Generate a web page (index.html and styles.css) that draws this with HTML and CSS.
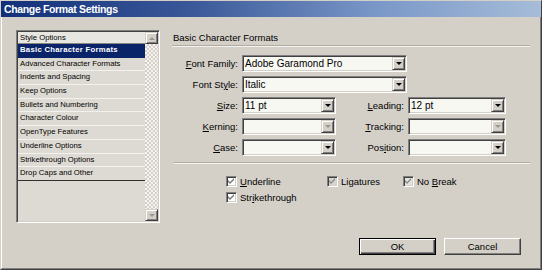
FILE: index.html
```html
<!DOCTYPE html>
<html>
<head>
<meta charset="utf-8">
<link rel="stylesheet" href="styles.css">
</head>
<body>
<div class="dialog">
  <div class="titlebar">Change Format Settings</div>
  <div class="body">
    <div class="main">
      <div class="list">
        <div class="items">
          <div class="list-head">Style Options</div>
          <div class="item selected">Basic Character Formats</div>
          <div class="item">Advanced Character Formats</div>
          <div class="item">Indents and Spacing</div>
          <div class="item">Keep Options</div>
          <div class="item">Bullets and Numbering</div>
          <div class="item">Character Colour</div>
          <div class="item">OpenType Features</div>
          <div class="item">Underline Options</div>
          <div class="item">Strikethrough Options</div>
          <div class="item last">Drop Caps and Other</div>
        </div>
        <div class="scroll">
          <div class="sbtn"><span class="arrow up"></span></div>
          <div class="track"></div>
          <div class="sbtn"><span class="arrow down"></span></div>
        </div>
      </div>
      <div class="panel">
        <div class="heading">Basic Character Formats</div>
        <div class="form">
          <label class="lbl"><u>F</u>ont Family:</label>
          <div class="select wide"><span class="value">Adobe Garamond Pro</span><span class="drop"><span class="arrow down dark"></span></span></div>

          <label class="lbl">Font St<u>y</u>le:</label>
          <div class="select wide"><span class="value">Italic</span><span class="drop"><span class="arrow down dark"></span></span></div>

          <label class="lbl"><u>S</u>ize:</label>
          <div class="select"><span class="value">11 pt</span><span class="drop"><span class="arrow down dark"></span></span></div>
          <label class="lbl"><u>L</u>eading:</label>
          <div class="select"><span class="value">12 pt</span><span class="drop"><span class="arrow down dark"></span></span></div>

          <label class="lbl"><u>K</u>erning:</label>
          <div class="select"><span class="value"></span><span class="drop"><span class="arrow down"></span></span></div>
          <label class="lbl"><u>T</u>racking:</label>
          <div class="select"><span class="value"></span><span class="drop"><span class="arrow down"></span></span></div>

          <label class="lbl"><u>C</u>ase:</label>
          <div class="select"><span class="value"></span><span class="drop"><span class="arrow down dark"></span></span></div>
          <label class="lbl">Pos<u>i</u>tion:</label>
          <div class="select"><span class="value"></span><span class="drop"><span class="arrow down dark"></span></span></div>
        </div>
        <div class="separator"></div>
        <div class="checks">
          <div class="check"><span class="box white"><svg viewBox="0 0 7 7" width="7" height="7"><path d="M0 2 L2 4 L6 0 L6 2 L2 6 L0 4 Z" fill="#7a7a7a"/></svg></span><span class="ctext"><u>U</u>nderline</span></div>
          <div class="check"><span class="box grey"><svg viewBox="0 0 7 7" width="7" height="7"><path d="M0 2 L2 4 L6 0 L6 2 L2 6 L0 4 Z" fill="#8a8a8a"/></svg></span><span class="ctext">Ligatures</span></div>
          <div class="check"><span class="box light"><svg viewBox="0 0 7 7" width="7" height="7"><path d="M0 2 L2 4 L6 0 L6 2 L2 6 L0 4 Z" fill="#8a8a8a"/></svg></span><span class="ctext">No <u>B</u>reak</span></div>
          <div class="check"><span class="box white"><svg viewBox="0 0 7 7" width="7" height="7"><path d="M0 2 L2 4 L6 0 L6 2 L2 6 L0 4 Z" fill="#7a7a7a"/></svg></span><span class="ctext">Str<u>i</u>kethrough</span></div>
        </div>
      </div>
    </div>
    <div class="buttons">
      <button class="btn default">OK</button>
      <button class="btn">Cancel</button>
    </div>
  </div>
</div>
</body>
</html>
```

FILE: styles.css
```css
html, body {
  margin: 0;
  padding: 0;
}
body {
  width: 542px;
  height: 270px;
  overflow: hidden;
  background: #d4d0c8;
  font-family: "Liberation Sans", Arial, sans-serif;
  color: #000;
}
.dialog {
  box-sizing: border-box;
  width: 542px;
  height: 270px;
  border: 1px solid;
  border-color: #d4d0c8 #404040 #404040 #d4d0c8;
  display: flex;
  flex-direction: column;
}
.titlebar {
  height: 16px;
  line-height: 16px;
  padding-left: 3px;
  background: linear-gradient(to right, #12307a 0%, #3a5898 35%, #7a98c8 70%, #a6bcd8 100%);
  color: #fff;
  font-weight: bold;
  font-size: 10.5px;
  letter-spacing: -0.35px;
  white-space: nowrap;
}
.body {
  flex: 1;
  border-left: 1px solid #fff;
  border-right: 1px solid #808080;
  border-bottom: 1px solid #808080;
  display: flex;
  flex-direction: column;
}
.main {
  display: flex;
  padding-top: 13px;
  padding-left: 14px;
}
.list {
  box-sizing: border-box;
  width: 144px;
  height: 193px;
  border: 1px solid;
  border-color: #808080 #fff #fff #808080;
  box-shadow: inset 1px 1px #404040, inset -1px -1px #d4d0c8;
  padding: 1px;
  display: flex;
  background: #dddad3;
}
.items {
  flex: 1;
  font-size: 7.7px;
}
.list-head {
  box-sizing: border-box;
  height: 12px;
  line-height: 11px;
  padding-left: 2px;
  background: #e8e6e1;
  border-bottom: 1px solid #8a8780;
}
.item {
  box-sizing: border-box;
  height: 13.7px;
  line-height: 12.7px;
  padding-left: 2px;
  border-bottom: 1px solid #f2f1ee;
  white-space: nowrap;
}
.item.selected {
  background: #0a246a;
  color: #fff;
  font-weight: bold;
  letter-spacing: 0.3px;
  border-bottom-color: #0a246a;
}
.item.last {
  border-bottom-color: #303030;
}
.scroll {
  width: 13px;
  display: flex;
  flex-direction: column;
}
.track {
  flex: 1;
  background: repeating-conic-gradient(#d4d0c8 0 25%, #f4f3f0 0 50%) 0 0 / 4px 4px;
}
.sbtn {
  box-sizing: border-box;
  height: 12px;
  background: #d4d0c8;
  border: 1px solid;
  border-color: #d4d0c8 #404040 #404040 #d4d0c8;
  box-shadow: inset 1px 1px #fff, inset -1px -1px #808080;
  display: flex;
  align-items: center;
  justify-content: center;
}
.arrow {
  width: 0;
  height: 0;
  border-left: 3px solid transparent;
  border-right: 3px solid transparent;
}
.arrow.down {
  border-top: 3px solid #9a9790;
}
.arrow.up {
  border-bottom: 3px solid #9a9790;
}
.arrow.down.dark {
  border-top-color: #000;
}
.panel {
  margin-left: 12px;
  width: 358px;
}
.heading {
  height: 15px;
  line-height: 15px;
  padding-left: 1px;
  font-size: 9.5px;
  border-bottom: 1px solid #b0aca4;
  box-shadow: 0 1px #f4f3f0;
}
.form {
  margin-top: 9px;
  display: grid;
  grid-template-columns: 66px 94px 64px 98px;
  grid-auto-rows: 17px;
  column-gap: 4px;
  row-gap: 4px;
}
.lbl {
  text-align: right;
  font-size: 9.5px;
  line-height: 17px;
  white-space: nowrap;
}
.select {
  box-sizing: border-box;
  height: 17px;
  border: 1px solid;
  border-color: #808080 #fff #fff #808080;
  box-shadow: inset 1px 1px #404040, inset -1px -1px #d4d0c8;
  padding: 1px;
  background: #f8f8f3;
  display: flex;
}
.select.wide {
  grid-column: 2 / 5;
  width: 165px;
}
.value {
  flex: 1;
  font-size: 10px;
  line-height: 13px;
  padding-left: 1px;
  white-space: nowrap;
}
.drop {
  box-sizing: border-box;
  width: 13px;
  height: 13px;
  background: #d4d0c8;
  border: 1px solid;
  border-color: #d4d0c8 #404040 #404040 #d4d0c8;
  box-shadow: inset 1px 1px #fff, inset -1px -1px #808080;
  display: flex;
  align-items: center;
  justify-content: center;
}
.separator {
  margin-top: 6px;
  margin-left: 2px;
  height: 0;
  border-top: 1px solid #b0aca4;
  border-bottom: 1px solid #f4f3f0;
}
.checks {
  margin-top: 9px;
  margin-left: 54px;
  display: grid;
  grid-template-columns: 101px 76px auto;
  grid-auto-rows: 16px;
}
.check {
  display: flex;
  align-items: center;
  font-size: 9.5px;
  white-space: nowrap;
}
.box {
  box-sizing: border-box;
  width: 11px;
  height: 11px;
  border: 1px solid;
  border-color: #808080 #fff #fff #808080;
  box-shadow: inset 1px 1px #404040, inset -1px -1px #d4d0c8;
  display: flex;
  align-items: center;
  justify-content: center;
  margin-right: 3px;
}
.box.white {
  background: #fff;
}
.box.grey {
  background: #d8d5ce;
}
.box.light {
  background: #e6e4df;
}
.buttons {
  margin-top: 15px;
  display: flex;
  justify-content: flex-end;
  gap: 8px;
  padding-right: 19px;
}
.btn {
  box-sizing: border-box;
  width: 77px;
  height: 17px;
  padding: 0;
  margin: 0;
  font-family: "Liberation Sans", Arial, sans-serif;
  font-size: 9.5px;
  color: #000;
  background: #d4d0c8;
  border: 1px solid;
  border-color: #fff #404040 #404040 #fff;
  box-shadow: inset -1px -1px #808080;
}
.btn.default {
  border: 1px solid #000;
  box-shadow: inset 1px 1px #fff, inset -1px -1px #404040, inset -2px -2px #808080;
}
```
